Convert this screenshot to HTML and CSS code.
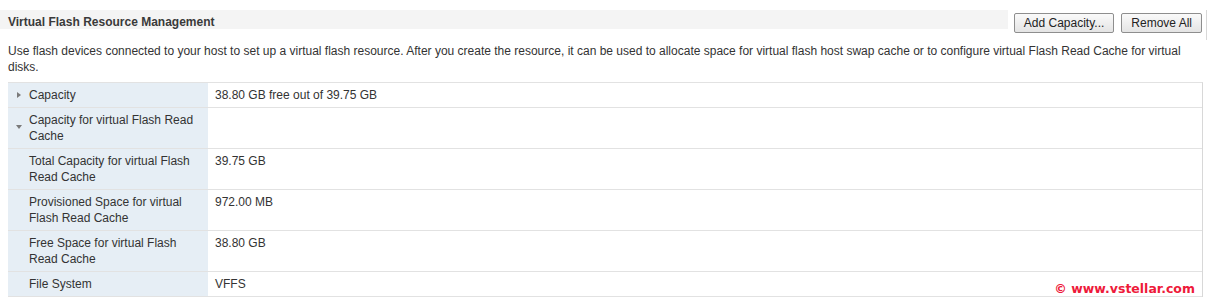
FILE: index.html
```html
<!DOCTYPE html>
<html lang="en">
<head>
    <meta charset="UTF-8">
    <title>Virtual Flash Resource Management</title>
    <link rel="stylesheet" href="styles.css">
</head>
<body>
    <div class="panel">
        <div class="panel-head">
            <span class="panel-title">Virtual Flash Resource Management</span>
            <div class="actions">
                <button class="btn">Add Capacity...</button>
                <button class="btn">Remove All</button>
            </div>
        </div>

        <p class="desc">Use flash devices connected to your host to set up a virtual flash resource. After you create the resource, it can be used to allocate space for virtual flash host swap cache or to configure virtual Flash Read Cache for virtual disks.</p>

        <div class="props">
            <div class="row">
                <div class="key"><span class="tri closed"></span>Capacity</div>
                <div class="val">38.80 GB free out of 39.75 GB</div>
            </div>
            <div class="row">
                <div class="key"><span class="tri open"></span>Capacity for virtual Flash Read Cache</div>
                <div class="val"></div>
            </div>
            <div class="row">
                <div class="key child">Total Capacity for virtual Flash Read Cache</div>
                <div class="val">39.75 GB</div>
            </div>
            <div class="row">
                <div class="key child">Provisioned Space for virtual Flash Read Cache</div>
                <div class="val">972.00 MB</div>
            </div>
            <div class="row">
                <div class="key child">Free Space for virtual Flash Read Cache</div>
                <div class="val">38.80 GB</div>
            </div>
            <div class="row">
                <div class="key child">File System</div>
                <div class="val">VFFS</div>
            </div>
        </div>

        <div class="mark">&copy; www.vstellar.com</div>
    </div>
</body>
</html>
```

FILE: styles.css
```css
body {
    margin: 0;
    font-family: "Liberation Sans", Arial, sans-serif;
    font-size: 12px;
    color: #333;
    background: #fff;
}

.panel {
    position: relative;
    height: 297px;
    overflow: hidden;
    padding-top: 10px;
    box-sizing: border-box;
}

.panel-head {
    display: flex;
    justify-content: space-between;
    align-items: flex-start;
    height: 19px;
    background: #f4f4f4;
    padding-left: 8px;
}

.panel-title {
    font-weight: bold;
    font-size: 12px;
    line-height: 16px;
    padding-top: 4px;
    color: #3a3a3a;
}

.actions {
    display: flex;
    gap: 7px;
    padding-top: 3px;
    padding-right: 4px;
    border-right: 1px solid #d8d8d8;
    background: #fff;
    height: 27px;
    padding-left: 6px;
}

.btn {
    font-family: "Liberation Sans", Arial, sans-serif;
    font-size: 12px;
    color: #222;
    height: 20px;
    padding: 0 9px;
    background: linear-gradient(#fafafa, #e4e4e4);
    border: 1px solid #8e8e8e;
    border-radius: 2px;
}

.desc {
    margin: 14px 0 0;
    padding: 0 20px 0 8px;
    line-height: 16px;
    color: #333;
}

.props {
    margin: 7px 4px 0 8px;
    border-top: 1px solid #e2e2e2;
    border-right: 1px solid #d8d8d8;
}

.row {
    display: flex;
    border-bottom: 1px solid #e2e2e2;
}

.key {
    width: 200px;
    flex: none;
    box-sizing: border-box;
    background: #e6eef5;
    padding: 4px 4px 4px 8px;
    line-height: 16px;
    display: flex;
    color: #333;
}

.key.child {
    padding-left: 21px;
}

.tri {
    flex: none;
    width: 13px;
    position: relative;
}

.tri.closed::before {
    content: "";
    position: absolute;
    left: 1px;
    top: 5px;
    border-left: 4px solid #7a7a7a;
    border-top: 3px solid transparent;
    border-bottom: 3px solid transparent;
}

.tri.open::before {
    content: "";
    position: absolute;
    left: 0;
    top: 13px;
    border-top: 4px solid #7a7a7a;
    border-left: 3px solid transparent;
    border-right: 3px solid transparent;
}

.val {
    flex: 1;
    padding: 4px 7px;
    line-height: 16px;
    color: #333;
}

.mark {
    position: absolute;
    right: 12px;
    top: 281px;
    font-family: "DejaVu Sans", Verdana, sans-serif;
    font-weight: bold;
    font-size: 12.5px;
    color: #ee1a3a;
}
```
